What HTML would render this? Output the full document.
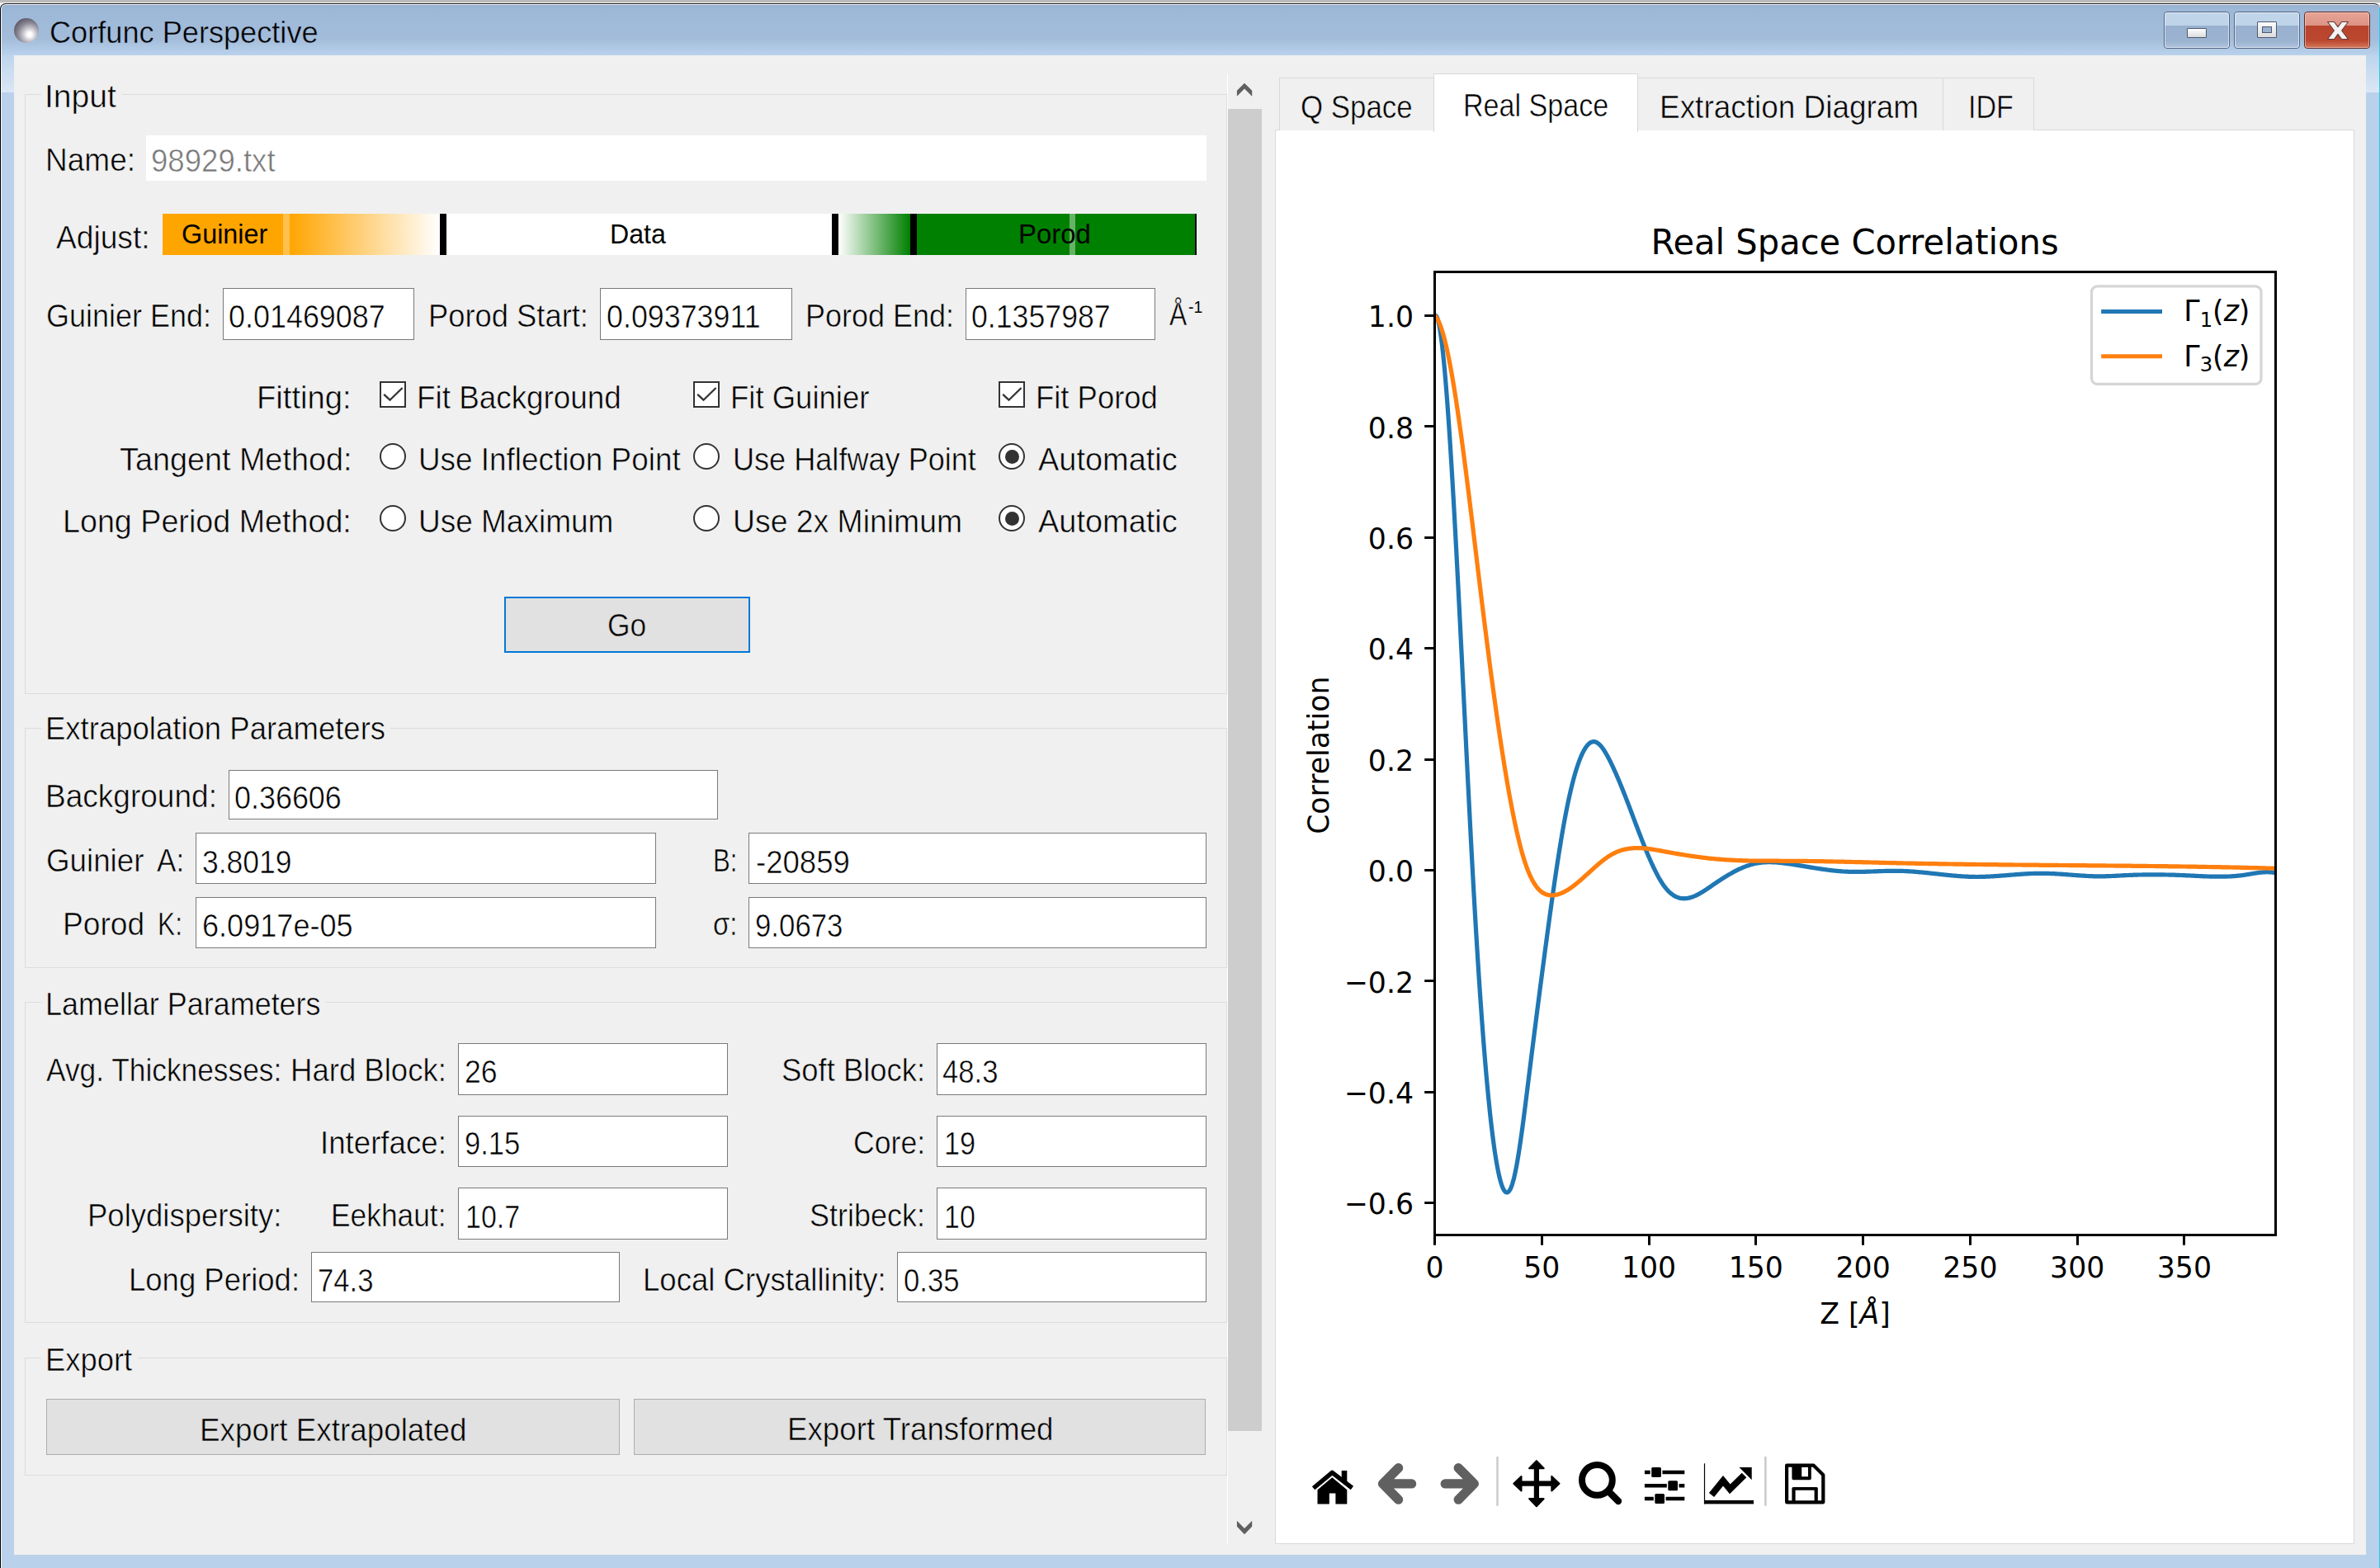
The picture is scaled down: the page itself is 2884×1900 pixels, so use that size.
<!DOCTYPE html>
<html lang="en"><head><meta charset="utf-8"><title>Corfunc Perspective</title>
<style>
html,body{margin:0;padding:0}
body{width:2884px;height:1900px;position:relative;overflow:hidden;background:#f0f0f0;font-family:'Liberation Sans',sans-serif;color:#000}
div,span.t,.abs{position:absolute;box-sizing:content-box}
.grp{left:0;top:0;width:0;height:0}
span.t{height:44px;line-height:44px;white-space:pre;transform-origin:0 0;display:block}
.e0{-webkit-text-stroke:0.55px #f0f0f0}.e1{-webkit-text-stroke:0.55px #fff}.e2{-webkit-text-stroke:0.55px #e1e1e1}.e3{-webkit-text-stroke:0.5px #a3bdda}
#topstrip{left:0;top:0;width:2884px;height:3px;background:#bbbbbb;border-bottom:1px solid #ededed}
#frame{left:0;top:4px;width:2883px;height:1895px;background:#b9d1ea;border-left:1px solid #000;border-top:1px solid #1c1c1c;border-radius:7px 7px 0 0;box-shadow:inset 1px 1px 0 rgba(255,255,255,.85)}
#titlebar{left:2px;top:6px;width:2881px;height:61px;border-radius:5px 5px 0 0;background:linear-gradient(#96b1d2 0%,#9db8d7 9%,#a0bad9 40%,#a3bcda 67%,#adc6e2 82%,#bad2ec 100%)}
#appicon{left:17px;top:22px;width:30px;height:30px;border-radius:50%;background:radial-gradient(circle at 63% 66%,#ffffff 0%,#ffffff 9%,#c9c7cf 28%,#8a8794 52%,#5a5666 78%,#464253 100%)}
#lglow{left:2px;top:67px;width:15px;height:45px;background:linear-gradient(#bdd4ed,#dbe7f5)}
#rglow{left:2867px;top:67px;width:17px;height:45px;background:linear-gradient(#bdd4ed,#dbe7f5)}
#rline{left:2883px;top:10px;width:1px;height:1890px;background:#2bcbe9}
#client{left:17px;top:67px;width:2850px;height:1817px;background:#f0f0f0}
.cap{border:1px solid #55657f;border-radius:4px;background:linear-gradient(#c1d5ea 0%,#bfd3e9 37%,#99b1cf 38%,#9bb2d0 80%,#aec4de 100%);box-sizing:border-box !important}
.cap .capin{left:0;top:0;right:0;bottom:0;border:1px solid rgba(235,243,252,.75);border-radius:3px}
.cap.close{background:linear-gradient(#e7a496 0%,#dc9384 37%,#b8432c 38%,#bb482f 80%,#d47a5c 100%);border-color:#5e2a2a}
.cap.close .capin{border-color:rgba(255,220,210,.55)}
.capico{background:linear-gradient(#fdfdfd,#dcdcdc);border:1px solid #4a5a72;border-radius:1px}
.gb{border:1px solid #dcdcdc}
.gbgap{background:#f0f0f0}
.ed{background:#fff;border:1px solid #7a7a7a}
.ed.nb{border:none}
.btn{background:#e1e1e1;border:1px solid #adadad}
.btn.def{border:2px solid #0078d7}
.cb{width:28px;height:28px;border:2px solid #333;background:#fff}
.rb{width:28px;height:28px;border:2px solid #333;border-radius:50%;background:#fff}
.rb .dot{left:5.5px;top:5.5px;width:17px;height:17px;border-radius:50%;background:#333}
#slider{left:197px;top:259px;width:1253px;height:50px;background:#fff}
#slider div{top:0;height:50px}
.sg1{left:0;width:146px;background:#ffa500}
.sg1l{left:146px;width:8px;background:#ffc04d}
.sg2{left:154px;width:182px;background:linear-gradient(90deg,#ffa500,#ffffff)}
.mk{width:8px;background:#000}
.sp1{left:819px;width:87px;background:linear-gradient(90deg,#ffffff,#008000)}
.sp2{left:914px;width:337px;background:#008000}
.sp2l{left:1099px;width:7px;background:#66b366}
.mkend{left:1251px;width:2px;background:#000}
#sbline{left:1487px;top:89px;width:1px;height:1782px;background:#fff}
#sbthumb{left:1488px;top:132px;width:41px;height:1602px;background:#cdcdcd}
#pane{left:1545px;top:157px;width:1306px;height:1712px;background:#fff;border:1px solid #d9d9d9}
.tab{background:#f0f0f0;border:1px solid #d9d9d9;border-bottom:none}
.tab.sel{background:#fff;border-bottom:none}
</style></head>
<body>
<div class="grp" id="window-frame">
<div id="topstrip"></div>
<div id="frame"></div>
<div id="titlebar"></div>
<div id="appicon"></div>
<span class="t e3" style="left:60.03px;top:18.00px;font-size:36px;transform:scaleX(1.0044);">Corfunc Perspective</span>
<div class="cap" style="left:2622px;top:14px;width:80px;height:45px"><div class="capin"><div class="capico" style="left:26px;top:18px;width:22px;height:10px"></div></div></div>
<div class="cap" style="left:2707px;top:14px;width:80px;height:45px"><div class="capin"><div class="capico" style="left:26px;top:10px;width:22px;height:18px"><div style="left:5px;top:5px;width:10px;height:6px;background:#9ab2d0;border:1px solid #4a5a72"></div></div></div></div>
<div class="cap close" style="left:2792px;top:14px;width:80px;height:45px"><div class="capin"><svg width="28" height="24" viewBox="0 0 28 24" style="position:absolute;left:25px;top:9px"><path d="M1.5 1.5 L9.5 1.5 L14 7.6 L18.5 1.5 L26.5 1.5 L18.6 12 L26.5 22.5 L18.5 22.5 L14 16.4 L9.5 22.5 L1.5 22.5 L9.4 12 Z" fill="#f3f3f3" stroke="#6b3a36" stroke-width="1.1" stroke-linejoin="round"/></svg></div></div>
<div id="lglow"></div><div id="rglow"></div><div id="rline"></div>
<div id="client"></div>
</div>
<div class="grp" id="corfunc-scroll-area">
<div class="grp" id="group-input">
<div class="gb" style="left:30px;top:114.0px;width:1455px;height:725.0px"></div>
<div class="gbgap" style="left:50.0px;top:112.0px;width:98.2px;height:5px"></div>
<span class="t e0" style="left:54.12px;top:95.00px;font-size:38px;transform:scaleX(1.0289);">Input</span>
<span class="t e0" style="left:54.72px;top:172.00px;font-size:38px;transform:scaleX(0.9741);">Name:</span>
<div class="ed nb" style="left:177.0px;top:164.0px;width:1284.7px;height:54.6px"></div>
<span class="t e1" style="left:182.62px;top:173.00px;font-size:38px;transform:scaleX(0.9629);color:#787878;">98929.txt</span>
<span class="t e0" style="left:68.45px;top:266.00px;font-size:38px;transform:scaleX(0.9775);">Adjust:</span>
<div id="slider"><div class="sg1"></div><div class="sg1l"></div><div class="sg2"></div><div class="mk" style="left:336px"></div><div class="mk" style="left:811px"></div><div class="sp1"></div><div class="mk" style="left:906px"></div><div class="sp2"></div><div class="sp2l"></div><div class="mkend"></div></div>
<span class="t" style="left:219.90px;top:262.00px;font-size:32.7px;transform:scaleX(0.9893);">Guinier</span>
<span class="t" style="left:739.00px;top:262.00px;font-size:32.7px;transform:scaleX(0.9815);">Data</span>
<span class="t" style="left:1233.84px;top:262.00px;font-size:32.7px;transform:scaleX(1.0068);">Porod</span>
<span class="t e0" style="left:55.89px;top:361.00px;font-size:38px;transform:scaleX(0.9466);">Guinier End:</span>
<div class="ed" style="left:270.0px;top:349.0px;width:229.6px;height:60.7px"></div>
<span class="t e1" style="left:276.58px;top:362.00px;font-size:38px;transform:scaleX(0.9453);">0.01469087</span>
<span class="t e0" style="left:519.47px;top:361.00px;font-size:38px;transform:scaleX(0.9566);">Porod Start:</span>
<div class="ed" style="left:727.0px;top:349.0px;width:231.0px;height:60.7px"></div>
<span class="t e1" style="left:734.58px;top:362.00px;font-size:38px;transform:scaleX(0.9427);">0.09373911</span>
<span class="t e0" style="left:975.80px;top:361.00px;font-size:38px;transform:scaleX(0.9471);">Porod End:</span>
<div class="ed" style="left:1170.0px;top:349.0px;width:228.0px;height:60.7px"></div>
<span class="t e1" style="left:1177.19px;top:362.00px;font-size:38px;transform:scaleX(0.9393);">0.1357987</span>
<span class="t e0" style="left:1416.53px;top:359.00px;font-size:38px;transform:scaleX(0.8371);">Å</span>
<span class="t" style="left:1439.95px;top:350.00px;font-size:21px;transform:scaleX(0.9256);">-1</span>
<span class="t e0" style="left:311.23px;top:460.00px;font-size:38px;transform:scaleX(1.0060);">Fitting:</span>
<div class="cb" style="left:460px;top:462px"><svg width="28" height="28" viewBox="0 0 28 28"><path d="M3.2 13.8 L10.5 20.7 L25.6 6" fill="none" stroke="#333" stroke-width="2.3"/></svg></div>
<span class="t e0" style="left:505.44px;top:460.00px;font-size:38px;transform:scaleX(0.9694);">Fit Background</span>
<div class="cb" style="left:840px;top:462px"><svg width="28" height="28" viewBox="0 0 28 28"><path d="M3.2 13.8 L10.5 20.7 L25.6 6" fill="none" stroke="#333" stroke-width="2.3"/></svg></div>
<span class="t e0" style="left:885.36px;top:460.00px;font-size:38px;transform:scaleX(0.9611);">Fit Guinier</span>
<div class="cb" style="left:1210px;top:462px"><svg width="28" height="28" viewBox="0 0 28 28"><path d="M3.2 13.8 L10.5 20.7 L25.6 6" fill="none" stroke="#333" stroke-width="2.3"/></svg></div>
<span class="t e0" style="left:1255.06px;top:460.00px;font-size:38px;transform:scaleX(0.9593);">Fit Porod</span>
<span class="t e0" style="left:144.57px;top:535.00px;font-size:38px;transform:scaleX(0.9940);">Tangent Method:</span>
<div class="rb" style="left:460px;top:537px"></div>
<span class="t e0" style="left:507.39px;top:535.00px;font-size:38px;transform:scaleX(0.9702);">Use Inflection Point</span>
<div class="rb" style="left:840px;top:537px"></div>
<span class="t e0" style="left:887.94px;top:535.00px;font-size:38px;transform:scaleX(0.9499);">Use Halfway Point</span>
<div class="rb" style="left:1210px;top:537px"><div class="dot"></div></div>
<span class="t e0" style="left:1258.46px;top:535.00px;font-size:38px;transform:scaleX(0.9985);">Automatic</span>
<span class="t e0" style="left:76.27px;top:610.00px;font-size:38px;transform:scaleX(0.9915);">Long Period Method:</span>
<div class="rb" style="left:460px;top:612px"></div>
<span class="t e0" style="left:507.38px;top:610.00px;font-size:38px;transform:scaleX(0.9733);">Use Maximum</span>
<div class="rb" style="left:840px;top:612px"></div>
<span class="t e0" style="left:887.85px;top:610.00px;font-size:38px;transform:scaleX(0.9829);">Use 2x Minimum</span>
<div class="rb" style="left:1210px;top:612px"><div class="dot"></div></div>
<span class="t e0" style="left:1258.46px;top:610.00px;font-size:38px;transform:scaleX(0.9985);">Automatic</span>
<div class="btn def" style="left:611px;top:723px;width:294px;height:64px"></div>
<span class="t e2" style="left:736.42px;top:736.00px;font-size:38px;transform:scaleX(0.9319);">Go</span>
</div>
<div class="grp" id="group-extrapolation">
<div class="gb" style="left:30px;top:882.3px;width:1455px;height:289.0px"></div>
<div class="gbgap" style="left:50.0px;top:880.3px;width:422.8px;height:5px"></div>
<span class="t e0" style="left:54.76px;top:861.00px;font-size:38px;transform:scaleX(0.9611);">Extrapolation Parameters</span>
<span class="t e0" style="left:54.72px;top:943.00px;font-size:38px;transform:scaleX(0.9746);">Background:</span>
<div class="ed" style="left:276.8px;top:932.7px;width:591.0px;height:58.7px"></div>
<span class="t e1" style="left:284.38px;top:945.00px;font-size:38px;transform:scaleX(0.9449);">0.36606</span>
<span class="t e0" style="left:55.86px;top:1021.00px;font-size:38px;transform:scaleX(0.9669);">Guinier</span>
<span class="t e0" style="left:190.44px;top:1021.00px;font-size:38px;transform:scaleX(0.9225);">A:</span>
<div class="ed" style="left:237.0px;top:1009.3px;width:555.7px;height:60.1px"></div>
<span class="t e1" style="left:245.28px;top:1023.00px;font-size:38px;transform:scaleX(0.9343);">3.8019</span>
<span class="t e0" style="left:863.95px;top:1021.00px;font-size:38px;transform:scaleX(0.8183);">B:</span>
<div class="ed" style="left:907.0px;top:1009.3px;width:552.7px;height:60.1px"></div>
<span class="t e1" style="left:916.41px;top:1023.00px;font-size:38px;transform:scaleX(0.9627);">-20859</span>
<span class="t e0" style="left:75.61px;top:1098.00px;font-size:38px;transform:scaleX(0.9779);">Porod</span>
<span class="t e0" style="left:190.70px;top:1098.00px;font-size:38px;transform:scaleX(0.8350);">K:</span>
<div class="ed" style="left:237.0px;top:1087.3px;width:555.7px;height:59.3px"></div>
<span class="t e1" style="left:244.96px;top:1100.00px;font-size:38px;transform:scaleX(0.9497);">6.0917e-05</span>
<span class="t e0" style="left:863.79px;top:1098.00px;font-size:38px;transform:scaleX(0.8653);">σ:</span>
<div class="ed" style="left:907.0px;top:1087.3px;width:552.7px;height:59.3px"></div>
<span class="t e1" style="left:915.39px;top:1100.00px;font-size:38px;transform:scaleX(0.9160);">9.0673</span>
</div>
<div class="grp" id="group-lamellar">
<div class="gb" style="left:30px;top:1214.4px;width:1455px;height:386.9px"></div>
<div class="gbgap" style="left:50.0px;top:1212.4px;width:344.4px;height:5px"></div>
<span class="t e0" style="left:54.80px;top:1195.00px;font-size:38px;transform:scaleX(0.9457);">Lamellar Parameters</span>
<span class="t e0" style="left:56.45px;top:1275.00px;font-size:38px;transform:scaleX(0.9292);">Avg. Thicknesses:</span>
<span class="t e0" style="left:351.76px;top:1275.00px;font-size:38px;transform:scaleX(0.9618);">Hard Block:</span>
<div class="ed" style="left:555.0px;top:1264.4px;width:325.0px;height:60.2px"></div>
<span class="t e1" style="left:562.74px;top:1277.00px;font-size:38px;transform:scaleX(0.9377);">26</span>
<span class="t e0" style="left:947.27px;top:1275.00px;font-size:38px;transform:scaleX(0.9590);">Soft Block:</span>
<div class="ed" style="left:1135.3px;top:1264.4px;width:324.4px;height:60.2px"></div>
<span class="t e1" style="left:1142.22px;top:1277.00px;font-size:38px;transform:scaleX(0.9125);">48.3</span>
<span class="t e0" style="left:387.83px;top:1363.00px;font-size:38px;transform:scaleX(0.9649);">Interface:</span>
<div class="ed" style="left:555.0px;top:1352.3px;width:325.0px;height:60.1px"></div>
<span class="t e1" style="left:562.89px;top:1364.00px;font-size:38px;transform:scaleX(0.9102);">9.15</span>
<span class="t e0" style="left:1034.28px;top:1363.00px;font-size:38px;transform:scaleX(0.9379);">Core:</span>
<div class="ed" style="left:1135.3px;top:1352.3px;width:324.4px;height:60.1px"></div>
<span class="t e1" style="left:1143.79px;top:1364.00px;font-size:38px;transform:scaleX(0.9037);">19</span>
<span class="t e0" style="left:105.76px;top:1451.00px;font-size:38px;transform:scaleX(0.9605);">Polydispersity:</span>
<span class="t e0" style="left:400.84px;top:1451.00px;font-size:38px;transform:scaleX(0.9297);">Eekhaut:</span>
<div class="ed" style="left:555.0px;top:1439.0px;width:325.0px;height:60.7px"></div>
<span class="t e1" style="left:564.41px;top:1453.00px;font-size:38px;transform:scaleX(0.8932);">10.7</span>
<span class="t e0" style="left:981.39px;top:1451.00px;font-size:38px;transform:scaleX(0.9469);">Stribeck:</span>
<div class="ed" style="left:1135.3px;top:1439.0px;width:324.4px;height:60.7px"></div>
<span class="t e1" style="left:1143.81px;top:1453.00px;font-size:38px;transform:scaleX(0.8943);">10</span>
<span class="t e0" style="left:156.36px;top:1529.00px;font-size:38px;transform:scaleX(0.9609);">Long Period:</span>
<div class="ed" style="left:377.4px;top:1517.3px;width:372.1px;height:59.2px"></div>
<span class="t e1" style="left:384.92px;top:1530.00px;font-size:38px;transform:scaleX(0.9138);">74.3</span>
<span class="t e0" style="left:778.75px;top:1529.00px;font-size:38px;transform:scaleX(0.9625);">Local Crystallinity:</span>
<div class="ed" style="left:1087.4px;top:1517.3px;width:372.3px;height:59.2px"></div>
<span class="t e1" style="left:1094.92px;top:1530.00px;font-size:38px;transform:scaleX(0.9140);">0.35</span>
</div>
<div class="grp" id="group-export">
<div class="gb" style="left:30px;top:1644.6px;width:1455px;height:141.7px"></div>
<div class="gbgap" style="left:50.0px;top:1642.6px;width:117.0px;height:5px"></div>
<span class="t e0" style="left:54.77px;top:1626.00px;font-size:38px;transform:scaleX(0.9580);">Export</span>
<div class="btn" style="left:56px;top:1695px;width:693px;height:66px"></div>
<span class="t e2" style="left:242.04px;top:1711.00px;font-size:38px;transform:scaleX(0.9693);">Export Extrapolated</span>
<div class="btn" style="left:768px;top:1695px;width:691px;height:66px"></div>
<span class="t e2" style="left:953.74px;top:1710.00px;font-size:38px;transform:scaleX(0.9666);">Export Transformed</span>
</div>
<div class="grp" id="scrollbar">
<div id="sbline"></div><div id="sbthumb"></div>
<svg class="abs" style="left:1496px;top:98px" width="24" height="22" viewBox="1496 98 24 22"><path d="M1498.9 116.7 L1508 107.6 L1517.2 116.7 V109.8 L1508 100.8 L1498.9 109.8 Z" fill="#606060"/></svg>
<svg class="abs" style="left:1496px;top:1840px" width="24" height="22" viewBox="1496 1840 24 22"><path d="M1498.9 1842.8 L1508 1851.9 L1517.2 1842.8 V1849.7 L1508 1859.2 L1498.9 1849.7 Z" fill="#606060"/></svg>
</div>
</div>
<div class="grp" id="plot-tabs">
<div id="pane"></div>
<div class="tab" style="left:1550px;top:94px;width:187px;height:63px"></div>
<div class="tab" style="left:1984px;top:94px;width:370px;height:63px"></div>
<div class="tab" style="left:2354px;top:94px;width:109px;height:63px"></div>
<div class="tab sel" style="left:1737px;top:89px;width:246px;height:70px"></div>
<span class="t e0" style="left:1576.08px;top:108.00px;font-size:38px;transform:scaleX(0.9171);">Q Space</span>
<span class="t e1" style="left:1772.93px;top:106.00px;font-size:38px;transform:scaleX(0.8972);">Real Space</span>
<span class="t e0" style="left:2010.53px;top:108.00px;font-size:38px;transform:scaleX(0.9722);">Extraction Diagram</span>
<span class="t e0" style="left:2384.75px;top:108.00px;font-size:38px;transform:scaleX(0.8957);">IDF</span>
<svg id="plot" class="abs" style="left:1546px;top:158px" width="1306" height="1712" viewBox="1546 158 1306 1712">
<clipPath id="axclip"><rect x="1738.5" y="329.5" width="1019.0" height="1167.0"/></clipPath>
<g clip-path="url(#axclip)" fill="none" stroke-width="5.2" stroke-linejoin="round" stroke-linecap="butt">
<path d="M1738.5 382.5 L1739.5 382.2 L1740.5 383.0 L1741.5 384.9 L1742.5 388.0 L1743.5 392.1 L1744.5 397.2 L1745.5 403.3 L1746.5 410.4 L1747.5 418.4 L1748.5 427.3 L1749.5 437.1 L1750.5 447.6 L1751.5 459.0 L1752.5 471.1 L1753.5 484.0 L1754.5 497.5 L1755.5 511.7 L1756.5 526.5 L1757.5 541.9 L1758.5 557.9 L1759.5 574.3 L1760.5 591.3 L1761.5 608.7 L1762.5 626.5 L1763.5 644.7 L1764.5 663.3 L1765.5 682.2 L1766.5 701.4 L1767.5 720.8 L1768.5 740.4 L1769.5 760.2 L1770.5 780.2 L1771.5 800.2 L1772.5 820.4 L1773.5 840.6 L1774.5 860.8 L1775.5 881.0 L1776.5 901.2 L1777.5 921.2 L1778.5 941.1 L1779.5 960.9 L1780.5 980.5 L1781.5 999.9 L1782.5 1019.0 L1783.5 1037.8 L1784.5 1056.3 L1785.5 1074.4 L1786.5 1092.1 L1787.5 1109.5 L1788.5 1126.4 L1789.5 1142.9 L1790.5 1158.9 L1791.5 1174.6 L1792.5 1189.8 L1793.5 1204.6 L1794.5 1218.9 L1795.5 1232.9 L1796.5 1246.4 L1797.5 1259.5 L1798.5 1272.1 L1799.5 1284.3 L1800.5 1296.1 L1801.5 1307.4 L1802.5 1318.3 L1803.5 1328.8 L1804.5 1338.8 L1805.5 1348.4 L1806.5 1357.5 L1807.5 1366.2 L1808.5 1374.4 L1809.5 1382.2 L1810.5 1389.6 L1811.5 1396.5 L1812.5 1402.9 L1813.5 1408.9 L1814.5 1414.4 L1815.5 1419.5 L1816.5 1424.1 L1817.5 1428.3 L1818.5 1432.0 L1819.5 1435.3 L1820.5 1438.0 L1821.5 1440.4 L1822.5 1442.2 L1823.5 1443.6 L1824.5 1444.5 L1825.5 1445.0 L1826.5 1445.0 L1827.5 1444.5 L1828.5 1443.5 L1829.5 1442.1 L1830.5 1440.2 L1831.5 1437.8 L1832.5 1435.0 L1833.5 1431.6 L1834.5 1427.8 L1835.5 1423.5 L1836.5 1418.8 L1837.5 1413.7 L1838.5 1408.2 L1839.5 1402.3 L1840.5 1396.1 L1841.5 1389.6 L1842.5 1382.9 L1843.5 1375.8 L1844.5 1368.6 L1845.5 1361.2 L1846.5 1353.6 L1847.5 1345.8 L1848.5 1338.0 L1849.5 1330.0 L1850.5 1322.0 L1851.5 1314.0 L1852.5 1305.9 L1853.5 1297.9 L1854.5 1289.9 L1855.5 1281.9 L1856.5 1273.9 L1857.5 1266.0 L1858.5 1258.1 L1859.5 1250.2 L1860.5 1242.3 L1861.5 1234.5 L1862.5 1226.7 L1863.5 1218.9 L1864.5 1211.2 L1865.5 1203.4 L1866.5 1195.7 L1867.5 1188.1 L1868.5 1180.5 L1869.5 1172.9 L1870.5 1165.3 L1871.5 1157.8 L1872.5 1150.2 L1873.5 1142.8 L1874.5 1135.3 L1875.5 1127.9 L1876.5 1120.6 L1877.5 1113.3 L1878.5 1106.0 L1879.5 1098.8 L1880.5 1091.7 L1881.5 1084.6 L1882.5 1077.6 L1883.5 1070.7 L1884.5 1063.9 L1885.5 1057.1 L1886.5 1050.5 L1887.5 1043.9 L1888.5 1037.5 L1889.5 1031.2 L1890.5 1025.0 L1891.5 1018.9 L1892.5 1012.9 L1893.5 1007.1 L1894.5 1001.4 L1895.5 995.9 L1896.5 990.5 L1897.5 985.3 L1898.5 980.2 L1899.5 975.3 L1900.5 970.5 L1901.5 965.9 L1902.5 961.4 L1903.5 957.1 L1904.5 953.0 L1905.5 949.0 L1906.5 945.1 L1907.5 941.4 L1908.5 937.9 L1909.5 934.5 L1910.5 931.3 L1911.5 928.2 L1912.5 925.3 L1913.5 922.5 L1914.5 919.9 L1915.5 917.4 L1916.5 915.1 L1917.5 912.9 L1918.5 910.9 L1919.5 909.1 L1920.5 907.4 L1921.5 905.8 L1922.5 904.4 L1923.5 903.2 L1924.5 902.1 L1925.5 901.1 L1926.5 900.3 L1927.5 899.7 L1928.5 899.2 L1929.5 898.9 L1930.5 898.7 L1931.5 898.7 L1932.5 898.8 L1933.5 899.1 L1934.5 899.5 L1935.5 900.1 L1936.5 900.8 L1937.5 901.6 L1938.5 902.5 L1939.5 903.6 L1940.5 904.7 L1941.5 906.0 L1942.5 907.3 L1943.5 908.8 L1944.5 910.4 L1945.5 912.0 L1946.5 913.7 L1947.5 915.5 L1948.5 917.3 L1949.5 919.2 L1950.5 921.2 L1951.5 923.2 L1952.5 925.2 L1953.5 927.3 L1954.5 929.4 L1955.5 931.6 L1956.5 933.8 L1957.5 936.0 L1958.5 938.3 L1959.5 940.6 L1960.5 942.9 L1961.5 945.3 L1962.5 947.6 L1963.5 950.1 L1964.5 952.5 L1965.5 955.0 L1966.5 957.4 L1967.5 960.0 L1968.5 962.5 L1969.5 965.0 L1970.5 967.6 L1971.5 970.2 L1972.5 972.8 L1973.5 975.4 L1974.5 978.0 L1975.5 980.7 L1976.5 983.3 L1977.5 986.0 L1978.5 988.6 L1979.5 991.3 L1980.5 993.9 L1981.5 996.6 L1982.5 999.2 L1983.5 1001.8 L1984.5 1004.5 L1985.5 1007.1 L1986.5 1009.7 L1987.5 1012.3 L1988.5 1014.9 L1989.5 1017.5 L1990.5 1020.0 L1991.5 1022.5 L1992.5 1025.0 L1993.5 1027.5 L1994.5 1030.0 L1995.5 1032.4 L1996.5 1034.8 L1997.5 1037.2 L1998.5 1039.5 L1999.5 1041.8 L2000.5 1044.0 L2001.5 1046.3 L2002.5 1048.4 L2003.5 1050.6 L2004.5 1052.7 L2005.5 1054.7 L2006.5 1056.7 L2007.5 1058.6 L2008.5 1060.5 L2009.5 1062.4 L2010.5 1064.2 L2011.5 1065.9 L2012.5 1067.5 L2013.5 1069.1 L2014.5 1070.7 L2015.5 1072.2 L2016.5 1073.6 L2017.5 1074.9 L2018.5 1076.2 L2019.5 1077.4 L2020.5 1078.5 L2021.5 1079.6 L2022.5 1080.6 L2023.5 1081.5 L2024.5 1082.4 L2025.5 1083.2 L2026.5 1083.9 L2027.5 1084.6 L2028.5 1085.3 L2029.5 1085.8 L2030.5 1086.4 L2031.5 1086.8 L2032.5 1087.2 L2033.5 1087.6 L2034.5 1087.9 L2035.5 1088.2 L2036.5 1088.4 L2037.5 1088.5 L2038.5 1088.7 L2039.5 1088.7 L2040.5 1088.8 L2041.5 1088.7 L2042.5 1088.7 L2043.5 1088.6 L2044.5 1088.5 L2045.5 1088.3 L2046.5 1088.1 L2047.5 1087.9 L2048.5 1087.6 L2049.5 1087.3 L2050.5 1087.0 L2051.5 1086.6 L2052.5 1086.2 L2053.5 1085.8 L2054.5 1085.4 L2055.5 1084.9 L2056.5 1084.4 L2057.5 1083.9 L2058.5 1083.4 L2059.5 1082.8 L2060.5 1082.2 L2061.5 1081.7 L2062.5 1081.1 L2063.5 1080.4 L2064.5 1079.8 L2065.5 1079.2 L2066.5 1078.5 L2067.5 1077.9 L2068.5 1077.2 L2069.5 1076.5 L2070.5 1075.8 L2071.5 1075.2 L2072.5 1074.5 L2073.5 1073.8 L2074.5 1073.1 L2075.5 1072.4 L2076.5 1071.7 L2077.5 1071.0 L2078.5 1070.4 L2079.5 1069.7 L2080.5 1069.0 L2081.5 1068.3 L2082.5 1067.7 L2083.5 1067.0 L2084.5 1066.4 L2085.5 1065.7 L2086.5 1065.1 L2087.5 1064.4 L2088.5 1063.8 L2089.5 1063.2 L2090.5 1062.5 L2091.5 1061.9 L2092.5 1061.3 L2093.5 1060.7 L2094.5 1060.1 L2095.5 1059.5 L2096.5 1059.0 L2097.5 1058.4 L2098.5 1057.8 L2099.5 1057.3 L2100.5 1056.7 L2101.5 1056.2 L2102.5 1055.7 L2103.5 1055.2 L2104.5 1054.7 L2105.5 1054.2 L2106.5 1053.7 L2107.5 1053.2 L2108.5 1052.7 L2109.5 1052.3 L2110.5 1051.8 L2111.5 1051.4 L2112.5 1051.0 L2113.5 1050.6 L2114.5 1050.2 L2115.5 1049.8 L2116.5 1049.4 L2117.5 1049.1 L2118.5 1048.7 L2119.5 1048.4 L2120.5 1048.1 L2121.5 1047.8 L2122.5 1047.5 L2123.5 1047.2 L2124.5 1047.0 L2125.5 1046.7 L2126.5 1046.5 L2127.5 1046.3 L2128.5 1046.1 L2129.5 1045.9 L2130.5 1045.7 L2131.5 1045.6 L2132.5 1045.4 L2133.5 1045.3 L2134.5 1045.2 L2135.5 1045.1 L2136.5 1045.0 L2137.5 1044.9 L2138.5 1044.9 L2139.5 1044.8 L2140.5 1044.8 L2141.5 1044.7 L2142.5 1044.7 L2143.5 1044.7 L2144.5 1044.7 L2145.5 1044.7 L2146.5 1044.7 L2147.5 1044.8 L2148.5 1044.8 L2149.5 1044.8 L2150.5 1044.9 L2151.5 1045.0 L2152.5 1045.0 L2153.5 1045.1 L2154.5 1045.2 L2155.5 1045.3 L2156.5 1045.4 L2157.5 1045.5 L2158.5 1045.6 L2159.5 1045.7 L2160.5 1045.8 L2161.5 1045.9 L2162.5 1046.1 L2163.5 1046.2 L2164.5 1046.3 L2165.5 1046.5 L2166.5 1046.6 L2167.5 1046.8 L2168.5 1046.9 L2169.5 1047.0 L2170.5 1047.2 L2171.5 1047.3 L2172.5 1047.5 L2173.5 1047.7 L2174.5 1047.8 L2175.5 1048.0 L2176.5 1048.1 L2177.5 1048.3 L2178.5 1048.4 L2179.5 1048.6 L2180.5 1048.8 L2181.5 1048.9 L2182.5 1049.1 L2183.5 1049.2 L2184.5 1049.4 L2185.5 1049.6 L2186.5 1049.7 L2187.5 1049.9 L2188.5 1050.1 L2189.5 1050.2 L2190.5 1050.4 L2191.5 1050.6 L2192.5 1050.7 L2193.5 1050.9 L2194.5 1051.1 L2195.5 1051.2 L2196.5 1051.4 L2197.5 1051.5 L2198.5 1051.7 L2199.5 1051.9 L2200.5 1052.0 L2201.5 1052.2 L2202.5 1052.3 L2203.5 1052.5 L2204.5 1052.6 L2205.5 1052.8 L2206.5 1052.9 L2207.5 1053.1 L2208.5 1053.2 L2209.5 1053.4 L2210.5 1053.5 L2211.5 1053.6 L2212.5 1053.8 L2213.5 1053.9 L2214.5 1054.0 L2215.5 1054.2 L2216.5 1054.3 L2217.5 1054.4 L2218.5 1054.6 L2219.5 1054.7 L2220.5 1054.8 L2221.5 1054.9 L2222.5 1055.0 L2223.5 1055.1 L2224.5 1055.2 L2225.5 1055.3 L2226.5 1055.4 L2227.5 1055.5 L2228.5 1055.6 L2229.5 1055.7 L2230.5 1055.7 L2231.5 1055.8 L2232.5 1055.9 L2233.5 1056.0 L2234.5 1056.0 L2235.5 1056.1 L2236.5 1056.1 L2237.5 1056.2 L2238.5 1056.2 L2239.5 1056.3 L2240.5 1056.3 L2241.5 1056.3 L2242.5 1056.4 L2243.5 1056.4 L2244.5 1056.4 L2245.5 1056.4 L2246.5 1056.4 L2247.5 1056.4 L2248.5 1056.4 L2249.5 1056.4 L2250.5 1056.4 L2251.5 1056.4 L2252.5 1056.4 L2253.5 1056.4 L2254.5 1056.4 L2255.5 1056.4 L2256.5 1056.4 L2257.5 1056.3 L2258.5 1056.3 L2259.5 1056.3 L2260.5 1056.3 L2261.5 1056.2 L2262.5 1056.2 L2263.5 1056.2 L2264.5 1056.1 L2265.5 1056.1 L2266.5 1056.1 L2267.5 1056.0 L2268.5 1056.0 L2269.5 1056.0 L2270.5 1055.9 L2271.5 1055.9 L2272.5 1055.9 L2273.5 1055.8 L2274.5 1055.8 L2275.5 1055.7 L2276.5 1055.7 L2277.5 1055.7 L2278.5 1055.6 L2279.5 1055.6 L2280.5 1055.6 L2281.5 1055.5 L2282.5 1055.5 L2283.5 1055.5 L2284.5 1055.4 L2285.5 1055.4 L2286.5 1055.4 L2287.5 1055.4 L2288.5 1055.3 L2289.5 1055.3 L2290.5 1055.3 L2291.5 1055.3 L2292.5 1055.3 L2293.5 1055.3 L2294.5 1055.3 L2295.5 1055.3 L2296.5 1055.3 L2297.5 1055.3 L2298.5 1055.3 L2299.5 1055.3 L2300.5 1055.3 L2301.5 1055.3 L2302.5 1055.3 L2303.5 1055.4 L2304.5 1055.4 L2305.5 1055.4 L2306.5 1055.5 L2307.5 1055.5 L2308.5 1055.6 L2309.5 1055.6 L2310.5 1055.7 L2311.5 1055.7 L2312.5 1055.8 L2313.5 1055.8 L2314.5 1055.9 L2315.5 1056.0 L2316.5 1056.0 L2317.5 1056.1 L2318.5 1056.2 L2319.5 1056.2 L2320.5 1056.3 L2321.5 1056.4 L2322.5 1056.5 L2323.5 1056.6 L2324.5 1056.7 L2325.5 1056.8 L2326.5 1056.8 L2327.5 1056.9 L2328.5 1057.0 L2329.5 1057.1 L2330.5 1057.2 L2331.5 1057.3 L2332.5 1057.4 L2333.5 1057.5 L2334.5 1057.6 L2335.5 1057.7 L2336.5 1057.8 L2337.5 1057.9 L2338.5 1058.0 L2339.5 1058.2 L2340.5 1058.3 L2341.5 1058.4 L2342.5 1058.5 L2343.5 1058.6 L2344.5 1058.7 L2345.5 1058.8 L2346.5 1058.9 L2347.5 1059.0 L2348.5 1059.1 L2349.5 1059.2 L2350.5 1059.4 L2351.5 1059.5 L2352.5 1059.6 L2353.5 1059.7 L2354.5 1059.8 L2355.5 1059.9 L2356.5 1060.0 L2357.5 1060.1 L2358.5 1060.2 L2359.5 1060.3 L2360.5 1060.4 L2361.5 1060.5 L2362.5 1060.6 L2363.5 1060.7 L2364.5 1060.8 L2365.5 1060.9 L2366.5 1061.0 L2367.5 1061.1 L2368.5 1061.1 L2369.5 1061.2 L2370.5 1061.3 L2371.5 1061.4 L2372.5 1061.5 L2373.5 1061.6 L2374.5 1061.6 L2375.5 1061.7 L2376.5 1061.8 L2377.5 1061.8 L2378.5 1061.9 L2379.5 1062.0 L2380.5 1062.0 L2381.5 1062.1 L2382.5 1062.1 L2383.5 1062.2 L2384.5 1062.2 L2385.5 1062.3 L2386.5 1062.3 L2387.5 1062.3 L2388.5 1062.4 L2389.5 1062.4 L2390.5 1062.4 L2391.5 1062.4 L2392.5 1062.4 L2393.5 1062.5 L2394.5 1062.5 L2395.5 1062.5 L2396.5 1062.5 L2397.5 1062.5 L2398.5 1062.4 L2399.5 1062.4 L2400.5 1062.4 L2401.5 1062.4 L2402.5 1062.4 L2403.5 1062.3 L2404.5 1062.3 L2405.5 1062.3 L2406.5 1062.2 L2407.5 1062.2 L2408.5 1062.1 L2409.5 1062.1 L2410.5 1062.1 L2411.5 1062.0 L2412.5 1061.9 L2413.5 1061.9 L2414.5 1061.8 L2415.5 1061.8 L2416.5 1061.7 L2417.5 1061.6 L2418.5 1061.6 L2419.5 1061.5 L2420.5 1061.4 L2421.5 1061.4 L2422.5 1061.3 L2423.5 1061.2 L2424.5 1061.1 L2425.5 1061.1 L2426.5 1061.0 L2427.5 1060.9 L2428.5 1060.8 L2429.5 1060.8 L2430.5 1060.7 L2431.5 1060.6 L2432.5 1060.5 L2433.5 1060.4 L2434.5 1060.4 L2435.5 1060.3 L2436.5 1060.2 L2437.5 1060.1 L2438.5 1060.0 L2439.5 1060.0 L2440.5 1059.9 L2441.5 1059.8 L2442.5 1059.7 L2443.5 1059.6 L2444.5 1059.6 L2445.5 1059.5 L2446.5 1059.4 L2447.5 1059.3 L2448.5 1059.3 L2449.5 1059.2 L2450.5 1059.1 L2451.5 1059.1 L2452.5 1059.0 L2453.5 1058.9 L2454.5 1058.9 L2455.5 1058.8 L2456.5 1058.8 L2457.5 1058.7 L2458.5 1058.7 L2459.5 1058.6 L2460.5 1058.6 L2461.5 1058.5 L2462.5 1058.5 L2463.5 1058.5 L2464.5 1058.4 L2465.5 1058.4 L2466.5 1058.4 L2467.5 1058.3 L2468.5 1058.3 L2469.5 1058.3 L2470.5 1058.3 L2471.5 1058.3 L2472.5 1058.3 L2473.5 1058.3 L2474.5 1058.3 L2475.5 1058.3 L2476.5 1058.3 L2477.5 1058.3 L2478.5 1058.3 L2479.5 1058.4 L2480.5 1058.4 L2481.5 1058.4 L2482.5 1058.4 L2483.5 1058.5 L2484.5 1058.5 L2485.5 1058.6 L2486.5 1058.6 L2487.5 1058.6 L2488.5 1058.7 L2489.5 1058.7 L2490.5 1058.8 L2491.5 1058.9 L2492.5 1058.9 L2493.5 1059.0 L2494.5 1059.0 L2495.5 1059.1 L2496.5 1059.2 L2497.5 1059.2 L2498.5 1059.3 L2499.5 1059.4 L2500.5 1059.4 L2501.5 1059.5 L2502.5 1059.6 L2503.5 1059.7 L2504.5 1059.7 L2505.5 1059.8 L2506.5 1059.9 L2507.5 1060.0 L2508.5 1060.0 L2509.5 1060.1 L2510.5 1060.2 L2511.5 1060.3 L2512.5 1060.3 L2513.5 1060.4 L2514.5 1060.5 L2515.5 1060.6 L2516.5 1060.6 L2517.5 1060.7 L2518.5 1060.8 L2519.5 1060.8 L2520.5 1060.9 L2521.5 1061.0 L2522.5 1061.1 L2523.5 1061.1 L2524.5 1061.2 L2525.5 1061.2 L2526.5 1061.3 L2527.5 1061.4 L2528.5 1061.4 L2529.5 1061.5 L2530.5 1061.5 L2531.5 1061.6 L2532.5 1061.6 L2533.5 1061.7 L2534.5 1061.7 L2535.5 1061.7 L2536.5 1061.8 L2537.5 1061.8 L2538.5 1061.8 L2539.5 1061.8 L2540.5 1061.8 L2541.5 1061.9 L2542.5 1061.9 L2543.5 1061.9 L2544.5 1061.9 L2545.5 1061.9 L2546.5 1061.9 L2547.5 1061.8 L2548.5 1061.8 L2549.5 1061.8 L2550.5 1061.8 L2551.5 1061.8 L2552.5 1061.7 L2553.5 1061.7 L2554.5 1061.7 L2555.5 1061.6 L2556.5 1061.6 L2557.5 1061.6 L2558.5 1061.5 L2559.5 1061.5 L2560.5 1061.4 L2561.5 1061.4 L2562.5 1061.3 L2563.5 1061.3 L2564.5 1061.2 L2565.5 1061.2 L2566.5 1061.1 L2567.5 1061.1 L2568.5 1061.0 L2569.5 1061.0 L2570.5 1060.9 L2571.5 1060.8 L2572.5 1060.8 L2573.5 1060.7 L2574.5 1060.7 L2575.5 1060.6 L2576.5 1060.6 L2577.5 1060.5 L2578.5 1060.5 L2579.5 1060.5 L2580.5 1060.4 L2581.5 1060.4 L2582.5 1060.3 L2583.5 1060.3 L2584.5 1060.3 L2585.5 1060.2 L2586.5 1060.2 L2587.5 1060.2 L2588.5 1060.1 L2589.5 1060.1 L2590.5 1060.1 L2591.5 1060.0 L2592.5 1060.0 L2593.5 1060.0 L2594.5 1060.0 L2595.5 1060.0 L2596.5 1059.9 L2597.5 1059.9 L2598.5 1059.9 L2599.5 1059.9 L2600.5 1059.9 L2601.5 1059.9 L2602.5 1059.9 L2603.5 1059.8 L2604.5 1059.8 L2605.5 1059.8 L2606.5 1059.8 L2607.5 1059.8 L2608.5 1059.8 L2609.5 1059.8 L2610.5 1059.8 L2611.5 1059.8 L2612.5 1059.8 L2613.5 1059.8 L2614.5 1059.8 L2615.5 1059.8 L2616.5 1059.9 L2617.5 1059.9 L2618.5 1059.9 L2619.5 1059.9 L2620.5 1059.9 L2621.5 1059.9 L2622.5 1059.9 L2623.5 1060.0 L2624.5 1060.0 L2625.5 1060.0 L2626.5 1060.0 L2627.5 1060.0 L2628.5 1060.1 L2629.5 1060.1 L2630.5 1060.1 L2631.5 1060.1 L2632.5 1060.2 L2633.5 1060.2 L2634.5 1060.2 L2635.5 1060.2 L2636.5 1060.3 L2637.5 1060.3 L2638.5 1060.3 L2639.5 1060.4 L2640.5 1060.4 L2641.5 1060.5 L2642.5 1060.5 L2643.5 1060.5 L2644.5 1060.6 L2645.5 1060.6 L2646.5 1060.7 L2647.5 1060.7 L2648.5 1060.8 L2649.5 1060.8 L2650.5 1060.8 L2651.5 1060.9 L2652.5 1060.9 L2653.5 1061.0 L2654.5 1061.0 L2655.5 1061.1 L2656.5 1061.1 L2657.5 1061.2 L2658.5 1061.2 L2659.5 1061.3 L2660.5 1061.3 L2661.5 1061.4 L2662.5 1061.4 L2663.5 1061.5 L2664.5 1061.5 L2665.5 1061.6 L2666.5 1061.6 L2667.5 1061.7 L2668.5 1061.7 L2669.5 1061.8 L2670.5 1061.8 L2671.5 1061.8 L2672.5 1061.9 L2673.5 1061.9 L2674.5 1062.0 L2675.5 1062.0 L2676.5 1062.0 L2677.5 1062.1 L2678.5 1062.1 L2679.5 1062.1 L2680.5 1062.1 L2681.5 1062.2 L2682.5 1062.2 L2683.5 1062.2 L2684.5 1062.2 L2685.5 1062.2 L2686.5 1062.2 L2687.5 1062.2 L2688.5 1062.2 L2689.5 1062.2 L2690.5 1062.2 L2691.5 1062.2 L2692.5 1062.2 L2693.5 1062.2 L2694.5 1062.2 L2695.5 1062.2 L2696.5 1062.1 L2697.5 1062.1 L2698.5 1062.1 L2699.5 1062.0 L2700.5 1062.0 L2701.5 1062.0 L2702.5 1061.9 L2703.5 1061.9 L2704.5 1061.8 L2705.5 1061.7 L2706.5 1061.7 L2707.5 1061.6 L2708.5 1061.5 L2709.5 1061.4 L2710.5 1061.3 L2711.5 1061.2 L2712.5 1061.1 L2713.5 1061.0 L2714.5 1060.9 L2715.5 1060.8 L2716.5 1060.7 L2717.5 1060.5 L2718.5 1060.4 L2719.5 1060.3 L2720.5 1060.1 L2721.5 1060.0 L2722.5 1059.8 L2723.5 1059.6 L2724.5 1059.5 L2725.5 1059.3 L2726.5 1059.1 L2727.5 1059.0 L2728.5 1058.8 L2729.5 1058.6 L2730.5 1058.5 L2731.5 1058.3 L2732.5 1058.1 L2733.5 1058.0 L2734.5 1057.8 L2735.5 1057.7 L2736.5 1057.5 L2737.5 1057.4 L2738.5 1057.3 L2739.5 1057.2 L2740.5 1057.1 L2741.5 1057.0 L2742.5 1056.9 L2743.5 1056.8 L2744.5 1056.8 L2745.5 1056.7 L2746.5 1056.7 L2747.5 1056.7 L2748.5 1056.7 L2749.5 1056.8 L2750.5 1056.8 L2751.5 1056.9 L2752.5 1057.0 L2753.5 1057.1 L2754.5 1057.2 L2755.5 1057.4 L2756.5 1057.6 L2757.5 1057.8" stroke="#1f77b4"/>
<path d="M1738.5 382.5 L1739.5 383.4 L1740.5 384.6 L1741.5 386.1 L1742.5 387.8 L1743.5 389.8 L1744.5 392.2 L1745.5 394.7 L1746.5 397.5 L1747.5 400.6 L1748.5 403.9 L1749.5 407.5 L1750.5 411.3 L1751.5 415.3 L1752.5 419.6 L1753.5 424.0 L1754.5 428.7 L1755.5 433.6 L1756.5 438.7 L1757.5 443.9 L1758.5 449.4 L1759.5 455.0 L1760.5 460.8 L1761.5 466.8 L1762.5 472.9 L1763.5 479.2 L1764.5 485.7 L1765.5 492.3 L1766.5 499.0 L1767.5 505.9 L1768.5 512.8 L1769.5 520.0 L1770.5 527.2 L1771.5 534.5 L1772.5 541.9 L1773.5 549.5 L1774.5 557.1 L1775.5 564.8 L1776.5 572.6 L1777.5 580.5 L1778.5 588.4 L1779.5 596.4 L1780.5 604.4 L1781.5 612.5 L1782.5 620.6 L1783.5 628.8 L1784.5 637.0 L1785.5 645.3 L1786.5 653.5 L1787.5 661.8 L1788.5 670.0 L1789.5 678.3 L1790.5 686.6 L1791.5 694.8 L1792.5 703.1 L1793.5 711.3 L1794.5 719.5 L1795.5 727.7 L1796.5 735.8 L1797.5 743.8 L1798.5 751.9 L1799.5 759.8 L1800.5 767.8 L1801.5 775.6 L1802.5 783.4 L1803.5 791.2 L1804.5 798.9 L1805.5 806.5 L1806.5 814.1 L1807.5 821.6 L1808.5 829.0 L1809.5 836.4 L1810.5 843.7 L1811.5 850.9 L1812.5 858.0 L1813.5 865.1 L1814.5 872.0 L1815.5 878.9 L1816.5 885.7 L1817.5 892.5 L1818.5 899.1 L1819.5 905.6 L1820.5 912.1 L1821.5 918.4 L1822.5 924.7 L1823.5 930.8 L1824.5 936.9 L1825.5 942.9 L1826.5 948.7 L1827.5 954.4 L1828.5 960.1 L1829.5 965.6 L1830.5 971.0 L1831.5 976.3 L1832.5 981.5 L1833.5 986.5 L1834.5 991.5 L1835.5 996.3 L1836.5 1001.0 L1837.5 1005.5 L1838.5 1009.9 L1839.5 1014.2 L1840.5 1018.4 L1841.5 1022.4 L1842.5 1026.3 L1843.5 1030.1 L1844.5 1033.7 L1845.5 1037.1 L1846.5 1040.4 L1847.5 1043.6 L1848.5 1046.6 L1849.5 1049.5 L1850.5 1052.3 L1851.5 1054.9 L1852.5 1057.3 L1853.5 1059.6 L1854.5 1061.9 L1855.5 1063.9 L1856.5 1065.9 L1857.5 1067.7 L1858.5 1069.5 L1859.5 1071.1 L1860.5 1072.6 L1861.5 1074.0 L1862.5 1075.3 L1863.5 1076.5 L1864.5 1077.6 L1865.5 1078.6 L1866.5 1079.5 L1867.5 1080.4 L1868.5 1081.1 L1869.5 1081.8 L1870.5 1082.4 L1871.5 1082.9 L1872.5 1083.4 L1873.5 1083.7 L1874.5 1084.1 L1875.5 1084.3 L1876.5 1084.5 L1877.5 1084.7 L1878.5 1084.8 L1879.5 1084.9 L1880.5 1084.9 L1881.5 1084.8 L1882.5 1084.8 L1883.5 1084.7 L1884.5 1084.5 L1885.5 1084.3 L1886.5 1084.1 L1887.5 1083.9 L1888.5 1083.6 L1889.5 1083.3 L1890.5 1082.9 L1891.5 1082.5 L1892.5 1082.1 L1893.5 1081.7 L1894.5 1081.2 L1895.5 1080.7 L1896.5 1080.2 L1897.5 1079.6 L1898.5 1079.0 L1899.5 1078.4 L1900.5 1077.8 L1901.5 1077.2 L1902.5 1076.5 L1903.5 1075.8 L1904.5 1075.1 L1905.5 1074.4 L1906.5 1073.6 L1907.5 1072.9 L1908.5 1072.1 L1909.5 1071.3 L1910.5 1070.5 L1911.5 1069.7 L1912.5 1068.8 L1913.5 1068.0 L1914.5 1067.1 L1915.5 1066.3 L1916.5 1065.4 L1917.5 1064.5 L1918.5 1063.6 L1919.5 1062.7 L1920.5 1061.8 L1921.5 1060.9 L1922.5 1060.0 L1923.5 1059.1 L1924.5 1058.2 L1925.5 1057.3 L1926.5 1056.4 L1927.5 1055.5 L1928.5 1054.6 L1929.5 1053.6 L1930.5 1052.7 L1931.5 1051.8 L1932.5 1051.0 L1933.5 1050.1 L1934.5 1049.2 L1935.5 1048.3 L1936.5 1047.5 L1937.5 1046.6 L1938.5 1045.8 L1939.5 1045.0 L1940.5 1044.1 L1941.5 1043.3 L1942.5 1042.6 L1943.5 1041.8 L1944.5 1041.0 L1945.5 1040.3 L1946.5 1039.6 L1947.5 1038.9 L1948.5 1038.2 L1949.5 1037.5 L1950.5 1036.9 L1951.5 1036.3 L1952.5 1035.7 L1953.5 1035.1 L1954.5 1034.6 L1955.5 1034.1 L1956.5 1033.6 L1957.5 1033.1 L1958.5 1032.7 L1959.5 1032.2 L1960.5 1031.8 L1961.5 1031.4 L1962.5 1031.1 L1963.5 1030.7 L1964.5 1030.4 L1965.5 1030.1 L1966.5 1029.8 L1967.5 1029.6 L1968.5 1029.3 L1969.5 1029.1 L1970.5 1028.9 L1971.5 1028.7 L1972.5 1028.5 L1973.5 1028.4 L1974.5 1028.2 L1975.5 1028.1 L1976.5 1028.0 L1977.5 1027.9 L1978.5 1027.8 L1979.5 1027.7 L1980.5 1027.7 L1981.5 1027.6 L1982.5 1027.6 L1983.5 1027.6 L1984.5 1027.6 L1985.5 1027.6 L1986.5 1027.6 L1987.5 1027.6 L1988.5 1027.7 L1989.5 1027.7 L1990.5 1027.8 L1991.5 1027.9 L1992.5 1028.0 L1993.5 1028.1 L1994.5 1028.2 L1995.5 1028.3 L1996.5 1028.4 L1997.5 1028.5 L1998.5 1028.6 L1999.5 1028.8 L2000.5 1028.9 L2001.5 1029.1 L2002.5 1029.2 L2003.5 1029.4 L2004.5 1029.5 L2005.5 1029.7 L2006.5 1029.9 L2007.5 1030.0 L2008.5 1030.2 L2009.5 1030.4 L2010.5 1030.6 L2011.5 1030.8 L2012.5 1030.9 L2013.5 1031.1 L2014.5 1031.3 L2015.5 1031.5 L2016.5 1031.7 L2017.5 1031.9 L2018.5 1032.1 L2019.5 1032.3 L2020.5 1032.4 L2021.5 1032.6 L2022.5 1032.8 L2023.5 1033.0 L2024.5 1033.2 L2025.5 1033.3 L2026.5 1033.5 L2027.5 1033.7 L2028.5 1033.9 L2029.5 1034.0 L2030.5 1034.2 L2031.5 1034.4 L2032.5 1034.6 L2033.5 1034.7 L2034.5 1034.9 L2035.5 1035.1 L2036.5 1035.2 L2037.5 1035.4 L2038.5 1035.6 L2039.5 1035.7 L2040.5 1035.9 L2041.5 1036.0 L2042.5 1036.2 L2043.5 1036.4 L2044.5 1036.5 L2045.5 1036.7 L2046.5 1036.8 L2047.5 1037.0 L2048.5 1037.1 L2049.5 1037.3 L2050.5 1037.4 L2051.5 1037.5 L2052.5 1037.7 L2053.5 1037.8 L2054.5 1038.0 L2055.5 1038.1 L2056.5 1038.2 L2057.5 1038.4 L2058.5 1038.5 L2059.5 1038.6 L2060.5 1038.8 L2061.5 1038.9 L2062.5 1039.0 L2063.5 1039.2 L2064.5 1039.3 L2065.5 1039.4 L2066.5 1039.5 L2067.5 1039.6 L2068.5 1039.7 L2069.5 1039.9 L2070.5 1040.0 L2071.5 1040.1 L2072.5 1040.2 L2073.5 1040.3 L2074.5 1040.4 L2075.5 1040.5 L2076.5 1040.6 L2077.5 1040.7 L2078.5 1040.8 L2079.5 1040.9 L2080.5 1041.0 L2081.5 1041.1 L2082.5 1041.1 L2083.5 1041.2 L2084.5 1041.3 L2085.5 1041.4 L2086.5 1041.5 L2087.5 1041.5 L2088.5 1041.6 L2089.5 1041.7 L2090.5 1041.8 L2091.5 1041.8 L2092.5 1041.9 L2093.5 1041.9 L2094.5 1042.0 L2095.5 1042.1 L2096.5 1042.1 L2097.5 1042.2 L2098.5 1042.2 L2099.5 1042.3 L2100.5 1042.3 L2101.5 1042.4 L2102.5 1042.4 L2103.5 1042.5 L2104.5 1042.5 L2105.5 1042.6 L2106.5 1042.6 L2107.5 1042.6 L2108.5 1042.7 L2109.5 1042.7 L2110.5 1042.7 L2111.5 1042.8 L2112.5 1042.8 L2113.5 1042.8 L2114.5 1042.9 L2115.5 1042.9 L2116.5 1042.9 L2117.5 1042.9 L2118.5 1043.0 L2119.5 1043.0 L2120.5 1043.0 L2121.5 1043.0 L2122.5 1043.0 L2123.5 1043.1 L2124.5 1043.1 L2125.5 1043.1 L2126.5 1043.1 L2127.5 1043.1 L2128.5 1043.1 L2129.5 1043.1 L2130.5 1043.1 L2131.5 1043.2 L2132.5 1043.2 L2133.5 1043.2 L2134.5 1043.2 L2135.5 1043.2 L2136.5 1043.2 L2137.5 1043.2 L2138.5 1043.2 L2139.5 1043.2 L2140.5 1043.2 L2141.5 1043.2 L2142.5 1043.2 L2143.5 1043.2 L2144.5 1043.2 L2145.5 1043.2 L2146.5 1043.2 L2147.5 1043.2 L2148.5 1043.2 L2149.5 1043.2 L2150.5 1043.2 L2151.5 1043.2 L2152.5 1043.2 L2153.5 1043.2 L2154.5 1043.2 L2155.5 1043.2 L2156.5 1043.3 L2157.5 1043.3 L2158.5 1043.3 L2159.5 1043.3 L2160.5 1043.3 L2161.5 1043.3 L2162.5 1043.3 L2163.5 1043.3 L2164.5 1043.3 L2165.5 1043.3 L2166.5 1043.3 L2167.5 1043.3 L2168.5 1043.3 L2169.5 1043.3 L2170.5 1043.3 L2171.5 1043.3 L2172.5 1043.3 L2173.5 1043.3 L2174.5 1043.3 L2175.5 1043.3 L2176.5 1043.3 L2177.5 1043.3 L2178.5 1043.3 L2179.5 1043.3 L2180.5 1043.3 L2181.5 1043.4 L2182.5 1043.4 L2183.5 1043.4 L2184.5 1043.4 L2185.5 1043.4 L2186.5 1043.4 L2187.5 1043.4 L2188.5 1043.4 L2189.5 1043.4 L2190.5 1043.4 L2191.5 1043.5 L2192.5 1043.5 L2193.5 1043.5 L2194.5 1043.5 L2195.5 1043.5 L2196.5 1043.5 L2197.5 1043.5 L2198.5 1043.6 L2199.5 1043.6 L2200.5 1043.6 L2201.5 1043.6 L2202.5 1043.6 L2203.5 1043.6 L2204.5 1043.6 L2205.5 1043.7 L2206.5 1043.7 L2207.5 1043.7 L2208.5 1043.7 L2209.5 1043.7 L2210.5 1043.7 L2211.5 1043.8 L2212.5 1043.8 L2213.5 1043.8 L2214.5 1043.8 L2215.5 1043.8 L2216.5 1043.9 L2217.5 1043.9 L2218.5 1043.9 L2219.5 1043.9 L2220.5 1043.9 L2221.5 1044.0 L2222.5 1044.0 L2223.5 1044.0 L2224.5 1044.0 L2225.5 1044.0 L2226.5 1044.1 L2227.5 1044.1 L2228.5 1044.1 L2229.5 1044.1 L2230.5 1044.1 L2231.5 1044.2 L2232.5 1044.2 L2233.5 1044.2 L2234.5 1044.2 L2235.5 1044.3 L2236.5 1044.3 L2237.5 1044.3 L2238.5 1044.3 L2239.5 1044.3 L2240.5 1044.4 L2241.5 1044.4 L2242.5 1044.4 L2243.5 1044.4 L2244.5 1044.5 L2245.5 1044.5 L2246.5 1044.5 L2247.5 1044.5 L2248.5 1044.6 L2249.5 1044.6 L2250.5 1044.6 L2251.5 1044.6 L2252.5 1044.7 L2253.5 1044.7 L2254.5 1044.7 L2255.5 1044.7 L2256.5 1044.7 L2257.5 1044.8 L2258.5 1044.8 L2259.5 1044.8 L2260.5 1044.8 L2261.5 1044.9 L2262.5 1044.9 L2263.5 1044.9 L2264.5 1044.9 L2265.5 1045.0 L2266.5 1045.0 L2267.5 1045.0 L2268.5 1045.0 L2269.5 1045.1 L2270.5 1045.1 L2271.5 1045.1 L2272.5 1045.1 L2273.5 1045.2 L2274.5 1045.2 L2275.5 1045.2 L2276.5 1045.2 L2277.5 1045.3 L2278.5 1045.3 L2279.5 1045.3 L2280.5 1045.3 L2281.5 1045.4 L2282.5 1045.4 L2283.5 1045.4 L2284.5 1045.4 L2285.5 1045.5 L2286.5 1045.5 L2287.5 1045.5 L2288.5 1045.5 L2289.5 1045.6 L2290.5 1045.6 L2291.5 1045.6 L2292.5 1045.6 L2293.5 1045.7 L2294.5 1045.7 L2295.5 1045.7 L2296.5 1045.7 L2297.5 1045.7 L2298.5 1045.8 L2299.5 1045.8 L2300.5 1045.8 L2301.5 1045.8 L2302.5 1045.9 L2303.5 1045.9 L2304.5 1045.9 L2305.5 1045.9 L2306.5 1046.0 L2307.5 1046.0 L2308.5 1046.0 L2309.5 1046.0 L2310.5 1046.0 L2311.5 1046.1 L2312.5 1046.1 L2313.5 1046.1 L2314.5 1046.1 L2315.5 1046.1 L2316.5 1046.2 L2317.5 1046.2 L2318.5 1046.2 L2319.5 1046.2 L2320.5 1046.2 L2321.5 1046.3 L2322.5 1046.3 L2323.5 1046.3 L2324.5 1046.3 L2325.5 1046.3 L2326.5 1046.4 L2327.5 1046.4 L2328.5 1046.4 L2329.5 1046.4 L2330.5 1046.4 L2331.5 1046.5 L2332.5 1046.5 L2333.5 1046.5 L2334.5 1046.5 L2335.5 1046.5 L2336.5 1046.6 L2337.5 1046.6 L2338.5 1046.6 L2339.5 1046.6 L2340.5 1046.6 L2341.5 1046.6 L2342.5 1046.7 L2343.5 1046.7 L2344.5 1046.7 L2345.5 1046.7 L2346.5 1046.7 L2347.5 1046.7 L2348.5 1046.8 L2349.5 1046.8 L2350.5 1046.8 L2351.5 1046.8 L2352.5 1046.8 L2353.5 1046.8 L2354.5 1046.9 L2355.5 1046.9 L2356.5 1046.9 L2357.5 1046.9 L2358.5 1046.9 L2359.5 1046.9 L2360.5 1047.0 L2361.5 1047.0 L2362.5 1047.0 L2363.5 1047.0 L2364.5 1047.0 L2365.5 1047.0 L2366.5 1047.0 L2367.5 1047.1 L2368.5 1047.1 L2369.5 1047.1 L2370.5 1047.1 L2371.5 1047.1 L2372.5 1047.1 L2373.5 1047.2 L2374.5 1047.2 L2375.5 1047.2 L2376.5 1047.2 L2377.5 1047.2 L2378.5 1047.2 L2379.5 1047.2 L2380.5 1047.3 L2381.5 1047.3 L2382.5 1047.3 L2383.5 1047.3 L2384.5 1047.3 L2385.5 1047.3 L2386.5 1047.3 L2387.5 1047.3 L2388.5 1047.4 L2389.5 1047.4 L2390.5 1047.4 L2391.5 1047.4 L2392.5 1047.4 L2393.5 1047.4 L2394.5 1047.4 L2395.5 1047.5 L2396.5 1047.5 L2397.5 1047.5 L2398.5 1047.5 L2399.5 1047.5 L2400.5 1047.5 L2401.5 1047.5 L2402.5 1047.5 L2403.5 1047.6 L2404.5 1047.6 L2405.5 1047.6 L2406.5 1047.6 L2407.5 1047.6 L2408.5 1047.6 L2409.5 1047.6 L2410.5 1047.6 L2411.5 1047.6 L2412.5 1047.7 L2413.5 1047.7 L2414.5 1047.7 L2415.5 1047.7 L2416.5 1047.7 L2417.5 1047.7 L2418.5 1047.7 L2419.5 1047.7 L2420.5 1047.7 L2421.5 1047.8 L2422.5 1047.8 L2423.5 1047.8 L2424.5 1047.8 L2425.5 1047.8 L2426.5 1047.8 L2427.5 1047.8 L2428.5 1047.8 L2429.5 1047.8 L2430.5 1047.9 L2431.5 1047.9 L2432.5 1047.9 L2433.5 1047.9 L2434.5 1047.9 L2435.5 1047.9 L2436.5 1047.9 L2437.5 1047.9 L2438.5 1047.9 L2439.5 1048.0 L2440.5 1048.0 L2441.5 1048.0 L2442.5 1048.0 L2443.5 1048.0 L2444.5 1048.0 L2445.5 1048.0 L2446.5 1048.0 L2447.5 1048.0 L2448.5 1048.0 L2449.5 1048.0 L2450.5 1048.1 L2451.5 1048.1 L2452.5 1048.1 L2453.5 1048.1 L2454.5 1048.1 L2455.5 1048.1 L2456.5 1048.1 L2457.5 1048.1 L2458.5 1048.1 L2459.5 1048.1 L2460.5 1048.2 L2461.5 1048.2 L2462.5 1048.2 L2463.5 1048.2 L2464.5 1048.2 L2465.5 1048.2 L2466.5 1048.2 L2467.5 1048.2 L2468.5 1048.2 L2469.5 1048.2 L2470.5 1048.2 L2471.5 1048.3 L2472.5 1048.3 L2473.5 1048.3 L2474.5 1048.3 L2475.5 1048.3 L2476.5 1048.3 L2477.5 1048.3 L2478.5 1048.3 L2479.5 1048.3 L2480.5 1048.3 L2481.5 1048.3 L2482.5 1048.4 L2483.5 1048.4 L2484.5 1048.4 L2485.5 1048.4 L2486.5 1048.4 L2487.5 1048.4 L2488.5 1048.4 L2489.5 1048.4 L2490.5 1048.4 L2491.5 1048.4 L2492.5 1048.4 L2493.5 1048.4 L2494.5 1048.5 L2495.5 1048.5 L2496.5 1048.5 L2497.5 1048.5 L2498.5 1048.5 L2499.5 1048.5 L2500.5 1048.5 L2501.5 1048.5 L2502.5 1048.5 L2503.5 1048.5 L2504.5 1048.5 L2505.5 1048.5 L2506.5 1048.6 L2507.5 1048.6 L2508.5 1048.6 L2509.5 1048.6 L2510.5 1048.6 L2511.5 1048.6 L2512.5 1048.6 L2513.5 1048.6 L2514.5 1048.6 L2515.5 1048.6 L2516.5 1048.6 L2517.5 1048.7 L2518.5 1048.7 L2519.5 1048.7 L2520.5 1048.7 L2521.5 1048.7 L2522.5 1048.7 L2523.5 1048.7 L2524.5 1048.7 L2525.5 1048.7 L2526.5 1048.7 L2527.5 1048.7 L2528.5 1048.7 L2529.5 1048.8 L2530.5 1048.8 L2531.5 1048.8 L2532.5 1048.8 L2533.5 1048.8 L2534.5 1048.8 L2535.5 1048.8 L2536.5 1048.8 L2537.5 1048.8 L2538.5 1048.8 L2539.5 1048.8 L2540.5 1048.8 L2541.5 1048.9 L2542.5 1048.9 L2543.5 1048.9 L2544.5 1048.9 L2545.5 1048.9 L2546.5 1048.9 L2547.5 1048.9 L2548.5 1048.9 L2549.5 1048.9 L2550.5 1048.9 L2551.5 1048.9 L2552.5 1049.0 L2553.5 1049.0 L2554.5 1049.0 L2555.5 1049.0 L2556.5 1049.0 L2557.5 1049.0 L2558.5 1049.0 L2559.5 1049.0 L2560.5 1049.0 L2561.5 1049.0 L2562.5 1049.0 L2563.5 1049.1 L2564.5 1049.1 L2565.5 1049.1 L2566.5 1049.1 L2567.5 1049.1 L2568.5 1049.1 L2569.5 1049.1 L2570.5 1049.1 L2571.5 1049.1 L2572.5 1049.1 L2573.5 1049.2 L2574.5 1049.2 L2575.5 1049.2 L2576.5 1049.2 L2577.5 1049.2 L2578.5 1049.2 L2579.5 1049.2 L2580.5 1049.2 L2581.5 1049.2 L2582.5 1049.2 L2583.5 1049.3 L2584.5 1049.3 L2585.5 1049.3 L2586.5 1049.3 L2587.5 1049.3 L2588.5 1049.3 L2589.5 1049.3 L2590.5 1049.3 L2591.5 1049.3 L2592.5 1049.3 L2593.5 1049.4 L2594.5 1049.4 L2595.5 1049.4 L2596.5 1049.4 L2597.5 1049.4 L2598.5 1049.4 L2599.5 1049.4 L2600.5 1049.4 L2601.5 1049.4 L2602.5 1049.5 L2603.5 1049.5 L2604.5 1049.5 L2605.5 1049.5 L2606.5 1049.5 L2607.5 1049.5 L2608.5 1049.5 L2609.5 1049.5 L2610.5 1049.5 L2611.5 1049.6 L2612.5 1049.6 L2613.5 1049.6 L2614.5 1049.6 L2615.5 1049.6 L2616.5 1049.6 L2617.5 1049.6 L2618.5 1049.6 L2619.5 1049.7 L2620.5 1049.7 L2621.5 1049.7 L2622.5 1049.7 L2623.5 1049.7 L2624.5 1049.7 L2625.5 1049.7 L2626.5 1049.7 L2627.5 1049.8 L2628.5 1049.8 L2629.5 1049.8 L2630.5 1049.8 L2631.5 1049.8 L2632.5 1049.8 L2633.5 1049.8 L2634.5 1049.8 L2635.5 1049.9 L2636.5 1049.9 L2637.5 1049.9 L2638.5 1049.9 L2639.5 1049.9 L2640.5 1049.9 L2641.5 1049.9 L2642.5 1050.0 L2643.5 1050.0 L2644.5 1050.0 L2645.5 1050.0 L2646.5 1050.0 L2647.5 1050.0 L2648.5 1050.0 L2649.5 1050.1 L2650.5 1050.1 L2651.5 1050.1 L2652.5 1050.1 L2653.5 1050.1 L2654.5 1050.1 L2655.5 1050.1 L2656.5 1050.2 L2657.5 1050.2 L2658.5 1050.2 L2659.5 1050.2 L2660.5 1050.2 L2661.5 1050.2 L2662.5 1050.3 L2663.5 1050.3 L2664.5 1050.3 L2665.5 1050.3 L2666.5 1050.3 L2667.5 1050.3 L2668.5 1050.4 L2669.5 1050.4 L2670.5 1050.4 L2671.5 1050.4 L2672.5 1050.4 L2673.5 1050.4 L2674.5 1050.5 L2675.5 1050.5 L2676.5 1050.5 L2677.5 1050.5 L2678.5 1050.5 L2679.5 1050.5 L2680.5 1050.6 L2681.5 1050.6 L2682.5 1050.6 L2683.5 1050.6 L2684.5 1050.6 L2685.5 1050.7 L2686.5 1050.7 L2687.5 1050.7 L2688.5 1050.7 L2689.5 1050.7 L2690.5 1050.7 L2691.5 1050.8 L2692.5 1050.8 L2693.5 1050.8 L2694.5 1050.8 L2695.5 1050.8 L2696.5 1050.9 L2697.5 1050.9 L2698.5 1050.9 L2699.5 1050.9 L2700.5 1050.9 L2701.5 1051.0 L2702.5 1051.0 L2703.5 1051.0 L2704.5 1051.0 L2705.5 1051.0 L2706.5 1051.1 L2707.5 1051.1 L2708.5 1051.1 L2709.5 1051.1 L2710.5 1051.1 L2711.5 1051.2 L2712.5 1051.2 L2713.5 1051.2 L2714.5 1051.2 L2715.5 1051.3 L2716.5 1051.3 L2717.5 1051.3 L2718.5 1051.3 L2719.5 1051.3 L2720.5 1051.4 L2721.5 1051.4 L2722.5 1051.4 L2723.5 1051.4 L2724.5 1051.5 L2725.5 1051.5 L2726.5 1051.5 L2727.5 1051.5 L2728.5 1051.6 L2729.5 1051.6 L2730.5 1051.6 L2731.5 1051.6 L2732.5 1051.6 L2733.5 1051.7 L2734.5 1051.7 L2735.5 1051.7 L2736.5 1051.7 L2737.5 1051.8 L2738.5 1051.8 L2739.5 1051.8 L2740.5 1051.8 L2741.5 1051.9 L2742.5 1051.9 L2743.5 1051.9 L2744.5 1051.9 L2745.5 1052.0 L2746.5 1052.0 L2747.5 1052.0 L2748.5 1052.1 L2749.5 1052.1 L2750.5 1052.1 L2751.5 1052.1 L2752.5 1052.2 L2753.5 1052.2 L2754.5 1052.2 L2755.5 1052.2 L2756.5 1052.3 L2757.5 1052.3" stroke="#ff7f0e"/>
</g>
<path d="M1738.5 1498.0 v10.8 M1868.5 1498.0 v10.8 M1998.5 1498.0 v10.8 M2127.5 1498.0 v10.8 M2257.5 1498.0 v10.8 M2387.5 1498.0 v10.8 M2517.5 1498.0 v10.8 M2646.5 1498.0 v10.8 M1737.0 1457.5 h-10.8 M1737.0 1323.5 h-10.8 M1737.0 1188.5 h-10.8 M1737.0 1054.5 h-10.8 M1737.0 920.5 h-10.8 M1737.0 785.5 h-10.8 M1737.0 651.5 h-10.8 M1737.0 516.5 h-10.8 M1737.0 382.5 h-10.8" stroke="#000" stroke-width="3" fill="none"/>
<rect x="1738.5" y="329.5" width="1019.0" height="1167.0" fill="none" stroke="#000" stroke-width="3"/>
<g font-family="'DejaVu Sans',sans-serif" font-size="36" fill="#000">
<text transform="translate(1738.5 1548.2) scale(0.964 1)" text-anchor="middle">0</text>
<text transform="translate(1868.3 1548.2) scale(0.964 1)" text-anchor="middle">50</text>
<text transform="translate(1998.0 1548.2) scale(0.964 1)" text-anchor="middle">100</text>
<text transform="translate(2127.8 1548.2) scale(0.964 1)" text-anchor="middle">150</text>
<text transform="translate(2257.6 1548.2) scale(0.964 1)" text-anchor="middle">200</text>
<text transform="translate(2387.4 1548.2) scale(0.964 1)" text-anchor="middle">250</text>
<text transform="translate(2517.2 1548.2) scale(0.964 1)" text-anchor="middle">300</text>
<text transform="translate(2646.9 1548.2) scale(0.964 1)" text-anchor="middle">350</text>
<text transform="translate(1713.0 1471.4) scale(0.964 1)" text-anchor="end">−0.6</text>
<text transform="translate(1713.0 1337.0) scale(0.964 1)" text-anchor="end">−0.4</text>
<text transform="translate(1713.0 1202.6) scale(0.964 1)" text-anchor="end">−0.2</text>
<text transform="translate(1713.0 1068.2) scale(0.964 1)" text-anchor="end">0.0</text>
<text transform="translate(1713.0 933.8) scale(0.964 1)" text-anchor="end">0.2</text>
<text transform="translate(1713.0 799.4) scale(0.964 1)" text-anchor="end">0.4</text>
<text transform="translate(1713.0 665.0) scale(0.964 1)" text-anchor="end">0.6</text>
<text transform="translate(1713.0 530.6) scale(0.964 1)" text-anchor="end">0.8</text>
<text transform="translate(1713.0 396.2) scale(0.964 1)" text-anchor="end">1.0</text>
<text transform="translate(2248.1 1603.5) scale(0.964 1)" text-anchor="middle">Z [<tspan font-style="oblique">Å</tspan>]</text>
<text transform="translate(1609.7 915.2) rotate(-90) scale(0.964 1)" text-anchor="middle">Correlation</text>
<text transform="translate(2247.5 308.3) scale(0.964 1)" text-anchor="middle" font-size="43.2">Real Space Correlations</text>
<rect x="2534.5" y="346.9" width="205.5" height="118.5" rx="7" fill="#fff" fill-opacity="0.8" stroke="#d5d5d5" stroke-width="3.2"/>
<path d="M2546.2 377.5 H2620" stroke="#1f77b4" stroke-width="5.1"/><path d="M2546.2 431.8 H2620" stroke="#ff7f0e" stroke-width="5.1"/>
<text transform="translate(2646.3 389.4) scale(0.964 1)" text-anchor="start">Γ<tspan font-size="25.2" dy="6.3">1</tspan><tspan dy="-6.3">(</tspan><tspan font-style="oblique">z</tspan>)</text>
<text transform="translate(2646.3 443.6) scale(0.964 1)" text-anchor="start">Γ<tspan font-size="25.2" dy="6.3">3</tspan><tspan dy="-6.3">(</tspan><tspan font-style="oblique">z</tspan>)</text>
</g>
</svg>
<svg id="toolbar" class="abs" style="left:1570px;top:1760px" width="680" height="75" viewBox="1570 1760 680 75">
<path d="M1591.6 1803.2 L1614.3 1784.3 L1638.4 1803" fill="none" stroke="#000" stroke-width="5.4" stroke-linejoin="round"/>
<rect x="1625.7" y="1782" width="6.6" height="14"/>
<path d="M1596.5 1805.2 L1614.3 1790.3 L1632.3 1805.2 V1822.4 H1618.4 V1809.6 H1610.8 V1822.4 H1596.5 Z"/>
<g stroke="#606060" stroke-width="11.3" stroke-linecap="round" stroke-linejoin="round" fill="none">
<path d="M1694.6 1778.7 L1675.5 1797.9 L1694.6 1817.2 M1678 1797.9 H1710.6"/>
<path d="M1767.2 1778.7 L1786.3 1797.9 L1767.2 1817.2 M1783.8 1797.9 H1751.2"/>
</g>
<rect x="1813.2" y="1765" width="2.6" height="59.7" fill="#cdcdcd"/><rect x="2138" y="1765" width="2.7" height="59.7" fill="#cdcdcd"/>
<path d="M1841.9 1797.7 H1881.9 M1861.9 1777.7 V1817.7" stroke="#000" stroke-width="6.2" fill="none"/>
<path transform="rotate(0 1861.9 1797.7)" d="M1889.5 1797.7 L1880.3000000000002 1788.9 V1806.5 Z" stroke="#000" stroke-width="2" stroke-linejoin="round"/>
<path transform="rotate(90 1861.9 1797.7)" d="M1889.5 1797.7 L1880.3000000000002 1788.9 V1806.5 Z" stroke="#000" stroke-width="2" stroke-linejoin="round"/>
<path transform="rotate(180 1861.9 1797.7)" d="M1889.5 1797.7 L1880.3000000000002 1788.9 V1806.5 Z" stroke="#000" stroke-width="2" stroke-linejoin="round"/>
<path transform="rotate(270 1861.9 1797.7)" d="M1889.5 1797.7 L1880.3000000000002 1788.9 V1806.5 Z" stroke="#000" stroke-width="2" stroke-linejoin="round"/>
<circle cx="1935.4" cy="1793.4" r="18.4" fill="none" stroke="#000" stroke-width="8"/>
<path d="M1949.5 1807.5 L1961 1819" stroke="#000" stroke-width="8.3" stroke-linecap="round"/>
<path d="M1992.9 1783.9 H1999.7 M2014.4 1783.9 H2041.3" stroke="#000" stroke-width="4.5"/>
<rect x="2001.2" y="1777.9" width="11.7" height="12" rx="1.5"/>
<path d="M1992.9 1800.2 H2019.8 M2034.5 1800.2 H2041.3" stroke="#000" stroke-width="4.5"/>
<rect x="2021.3" y="1794.2" width="11.7" height="12" rx="1.5"/>
<path d="M1992.9 1816.1 H2003.8 M2018.5 1816.1 H2041.3" stroke="#000" stroke-width="4.5"/>
<rect x="2005.3" y="1810.1" width="11.7" height="12" rx="1.5"/>
<path d="M2065.5 1773.3 V1822.4" stroke="#000" stroke-width="1.2"/><rect x="2065" y="1817.9" width="60" height="4.5"/>
<path d="M2074 1811.5 L2088 1794.3 L2096.3 1804.3 L2113.5 1787.5" fill="none" stroke="#000" stroke-width="8"/>
<path d="M2107.5 1778.1 H2122.7 V1793.3 Z"/>
<path d="M2165.1 1775.7 H2197.7 L2209.3 1787.3 V1820.3 H2165.1 Z" fill="none" stroke="#000" stroke-width="4.2" stroke-linejoin="round"/>
<path d="M2171.4 1777 H2194.8 V1791.5 Q2194.8 1793.2 2193 1793.2 H2173.2 Q2171.4 1793.2 2171.4 1791.5 Z M2183.2 1777.8 V1789.2 H2191 V1777.8 Z" fill-rule="evenodd"/>
<path d="M2171.4 1820 V1803.5 Q2171.4 1802 2173 1802 H2201.3 Q2202.8 1802 2202.8 1803.5 V1820 H2198.6 V1805.8 H2175.6 V1820 Z"/>
</svg>
</div>
</body></html>
